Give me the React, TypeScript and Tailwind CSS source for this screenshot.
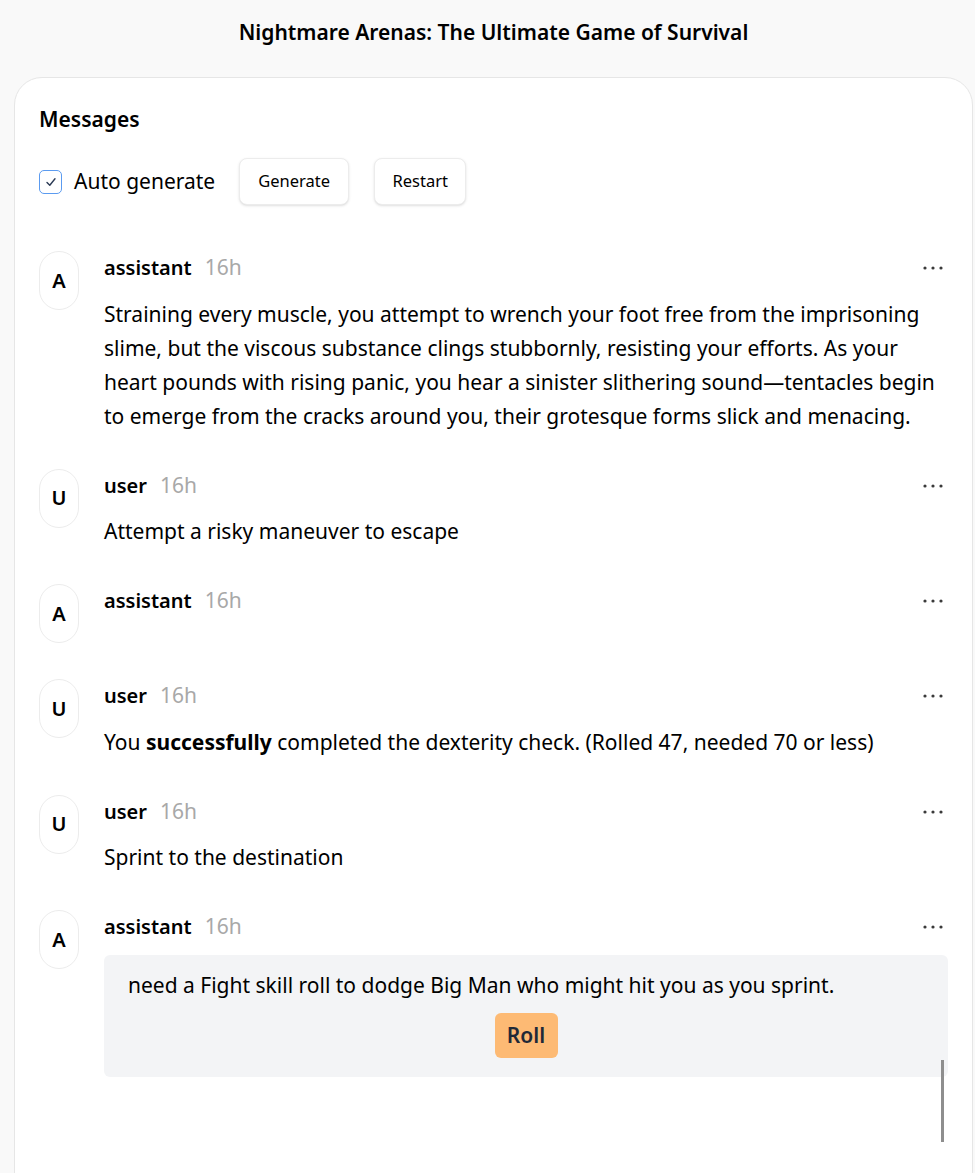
import React from 'react';

type Message = {
  role: 'assistant' | 'user';
  age: string;
  body?: React.ReactNode;
  roll?: string;
};

const messages: Message[] = [
  {
    role: 'assistant',
    age: '16h',
    body:
      'Straining every muscle, you attempt to wrench your foot free from the imprisoning slime, but the viscous substance clings stubbornly, resisting your efforts. As your heart pounds with rising panic, you hear a sinister slithering sound\u2014tentacles begin to emerge from the cracks around you, their grotesque forms slick and menacing.',
  },
  { role: 'user', age: '16h', body: 'Attempt a risky maneuver to escape' },
  { role: 'assistant', age: '16h' },
  {
    role: 'user',
    age: '16h',
    body: (
      <>
        You <b className="font-bold">successfully</b> completed the dexterity check. (Rolled 47, needed 70 or less)
      </>
    ),
  },
  { role: 'user', age: '16h', body: 'Sprint to the destination' },
  {
    role: 'assistant',
    age: '16h',
    roll: 'need a Fight skill roll to dodge Big Man who might hit you as you sprint.',
  },
];

function Dots() {
  return (
    <svg width="22" height="6" viewBox="0 0 22 6" className="text-[#3a3a3a]">
      <circle cx="3" cy="3" r="1.6" fill="currentColor" />
      <circle cx="11" cy="3" r="1.6" fill="currentColor" />
      <circle cx="19" cy="3" r="1.6" fill="currentColor" />
    </svg>
  );
}

function MessageRow({ msg }: { msg: Message }) {
  return (
    <div className="flex items-start">
      {/* Avatar */}
      <div className="w-10 h-[59px] shrink-0 rounded-full border border-[#ececec] flex items-center justify-center text-[20px] font-semibold text-black">
        {msg.role === 'assistant' ? 'A' : 'U'}
      </div>

      <div className="ml-[25px] flex-1 min-w-0">
        <div className="flex items-center h-[34px]">
          <span className="text-[20px] font-semibold text-black">{msg.role}</span>
          <span className="ml-[13px] text-[#a8a8a8]">{msg.age}</span>
          <button type="button" className="ml-auto mr-[4px] flex items-center h-[34px]" aria-label="More">
            <Dots />
          </button>
        </div>

        {msg.body && <div className="mt-[11.5px] text-black leading-[34px]">{msg.body}</div>}

        {msg.roll && (
          <div className="mt-[11px] rounded-md bg-[#f3f4f6] pt-[13px] pb-[19px] px-6">
            <div className="leading-[34px] text-black">{msg.roll}</div>
            <div className="flex justify-center mt-[11px]">
              <button
                type="button"
                className="h-[45px] w-[63px] rounded-md bg-[#fdba74] text-[#1f2937] font-semibold"
              >
                Roll
              </button>
            </div>
          </div>
        )}
      </div>
    </div>
  );
}

export default function App() {
  return (
    <div className="min-h-screen bg-[#f9f9f9] text-[21px] text-black font-['Noto_Sans',sans-serif] overflow-hidden">
      <h1 className="pt-[15px] pl-[12px] text-center text-[21px] font-semibold leading-[34px] text-black">
        Nightmare Arenas: The Ultimate Game of Survival
      </h1>

      <div className="relative mt-[28px] ml-[14px] mr-[2px] min-h-[1200px] rounded-t-[28px] border border-[#e6e6e6] bg-white px-6 pt-[26px]">
        <h2 className="text-[21px] font-semibold leading-[30px] text-black">Messages</h2>

        {/* Controls */}
        <div className="mt-[24px] flex items-center">
          <label className="flex items-center">
            <span className="w-[23px] h-[24px] rounded-[5px] border border-[#5b9bf0] flex items-center justify-center">
              <svg width="12" height="12" viewBox="0 0 12 12" fill="none">
                <path d="M2 6.5 L4.8 9.3 L10 2.8" stroke="#2b3a55" strokeWidth="1.4" strokeLinecap="round" strokeLinejoin="round" />
              </svg>
            </span>
            <span className="ml-[12px]">Auto generate</span>
          </label>
          <button
            type="button"
            className="ml-[24px] h-[47px] w-[110px] rounded-lg border border-[#ececec] bg-white text-[16.5px] shadow-sm"
          >
            Generate
          </button>
          <button
            type="button"
            className="ml-[25px] h-[47px] w-[92px] rounded-lg border border-[#ececec] bg-white text-[16.5px] shadow-sm"
          >
            Restart
          </button>
        </div>

        {/* Message list */}
        <div className="mt-[46px] flex flex-col gap-9">
          {messages.map((m, i) => (
            <MessageRow key={i} msg={m} />
          ))}
        </div>

        {/* scroll thumb */}
        <div className="absolute left-[926px] top-[982px] h-[82px] w-[3px] bg-[#8e8e8e]" />
      </div>
    </div>
  );
}
